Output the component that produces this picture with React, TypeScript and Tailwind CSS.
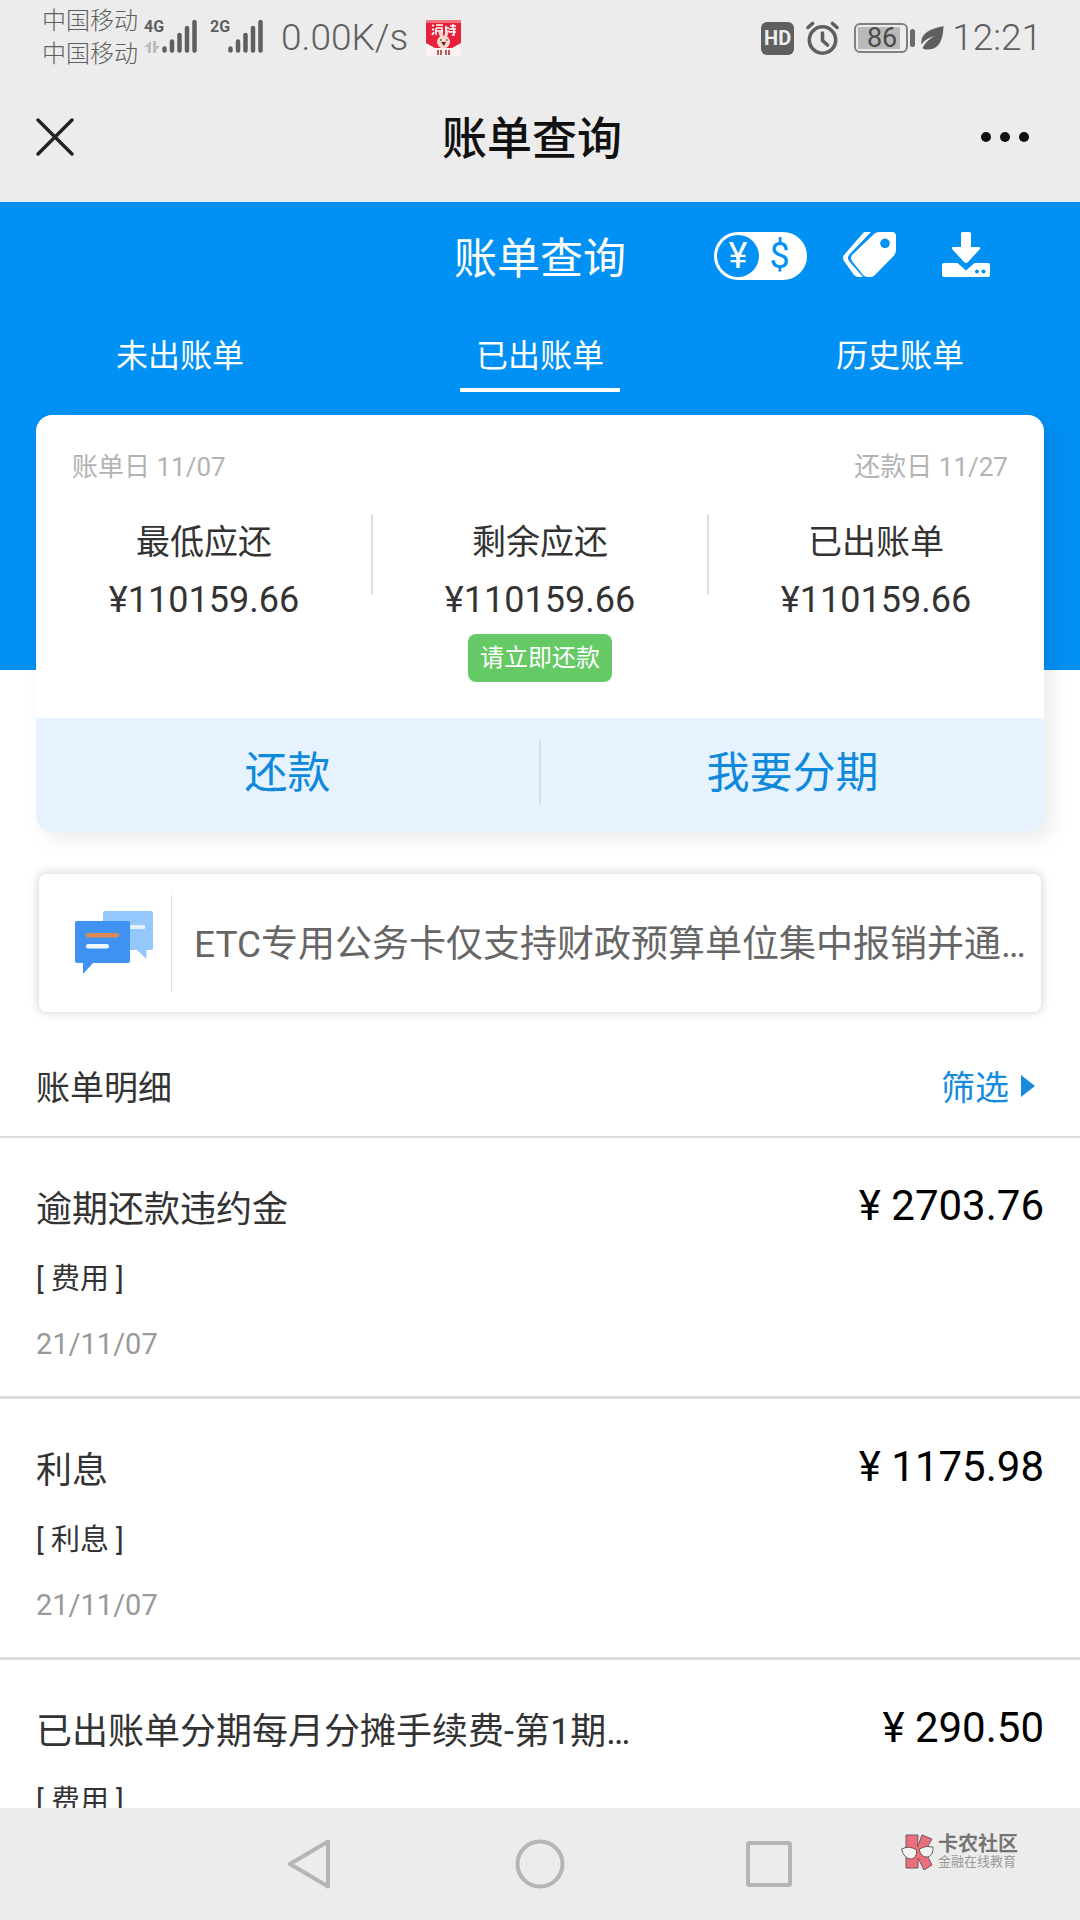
type Bill = { title: string; category: string; date: string; amount: string };

const TABS = ["未出账单", "已出账单", "历史账单"];

const SUMMARY = [
  { label: "最低应还", amount: "¥110159.66" },
  { label: "剩余应还", amount: "¥110159.66", tip: "请立即还款" },
  { label: "已出账单", amount: "¥110159.66" },
];

const BILLS: Bill[] = [
  { title: "逾期还款违约金", category: "[ 费用 ]", date: "21/11/07", amount: "¥ 2703.76" },
  { title: "利息", category: "[ 利息 ]", date: "21/11/07", amount: "¥ 1175.98" },
  { title: "已出账单分期每月分摊手续费-第1期…", category: "[ 费用 ]", date: "21/11/07", amount: "¥ 290.50" },
];

function Signal({ type, data }: { type: string; data?: boolean }) {
  return (
    <div className="flex h-[34px]">
      <div className="flex w-[18px] flex-col justify-between">
        <span className="text-base leading-4 font-bold">{type}</span>
        {data && (
          <svg className="h-3 w-4" viewBox="0 0 16 12" fill="#bdbdbd">
            <path d="M4 12V6H0L7 0v12zM9 0h3v5h4l-4 4v3H9z" />
          </svg>
        )}
      </div>
      <svg className="h-[34px] w-[35px]" viewBox="0 0 35 34" stroke="#5f5f5f" strokeWidth="4.500" strokeLinecap="round">
        <path d="M2.500 29.500v2M10 22.500v9M17.500 16v15.500M25 9v22.500M32.500 3v28.500" />
      </svg>
    </div>
  );
}

function StatusBar() {
  return (
    <div className="flex h-[72px] items-center justify-between pt-1 pr-[38px] pl-[42px] text-[#5f5f5f]">
      <div className="flex items-center">
        <div className="flex flex-col text-2xl leading-[33px] font-light">
          <span>中国移动</span>
          <span>中国移动</span>
        </div>
        <div className="ml-1.5 flex gap-[13px] pb-1">
          <Signal type="4G" data />
          <Signal type="2G" />
        </div>
        <span className="ml-[18px] text-[37px] font-light">0.00K/s</span>
        <svg className="ml-[18px] h-9 w-[35px]" viewBox="0 0 35 36">
          <rect width="35" height="36" fill="#fbf3f3" />
          <path d="M0 0h35v23l-9 5H9l-9-5z" fill="#e8203a" />
          <path d="M0 0h35v3H0z" fill="#f4707c" />
          <path
            d="M6 5l2 1M6 9l2 1M6 15l2-3M10 5h7M10 8h6v7M10 8v7M9 11h8M20 6v9M19 8h4M19 12l4-1M24 6h6M27 4v5M23 9h7M23 12h7M28 9v6h-2"
            fill="none"
            stroke="#fff"
            strokeWidth="1.600"
          />
          <path d="M14 12l2.500 8M21 12l-2.500 8" stroke="#f6d8cb" strokeWidth="3" strokeLinecap="round" />
          <circle cx="17.500" cy="22" r="6.500" fill="#f5d9cd" />
          <path d="M15 22h5l-2 4z" fill="#6d1a24" />
          <path d="M14 20h1.500M20 20h1.500" stroke="#553" strokeWidth="1.500" />
          <path d="M12 30v5M15 30v5M20 30v5M23 30v5" stroke="#b04a48" strokeWidth="1.800" />
        </svg>
      </div>
      <div className="flex items-center">
        <span className="flex h-[33px] w-[33px] items-center justify-center rounded-md bg-[#5f5f5f] text-xl font-bold text-[#ededed]">
          HD
        </span>
        <svg className="ml-3 h-[34px] w-[33px]" viewBox="0 0 33 34" fill="none" stroke="#5f5f5f" strokeLinecap="round">
          <circle cx="16.500" cy="19" r="13.200" strokeWidth="3.600" />
          <path d="M16.500 12v7.500l5 4.500" strokeWidth="3.600" />
          <path d="M2 6.500L6.500 2.500M31 6.500L26.500 2.500" strokeWidth="3.600" />
        </svg>
        <div className="ml-[15px] flex items-center gap-0.5">
          <div className="h-[30px] w-[54px] rounded-md border-2 border-[#808080] p-0.5">
            <div className="flex h-full w-[42px] items-center justify-center bg-[#b9b9b9] pl-1.5 text-[27px] text-[#4a4a4a]">86</div>
          </div>
          <div className="h-[18px] w-[5px] rounded-sm bg-[#6a6a6a]" />
        </div>
        <svg className="ml-1.5 h-6 w-[23px]" viewBox="0 0 23 24">
          <path d="M22.500 0C22 11 20 24 6 23.500c-2 0-3-.500-4.500-1.500C4 17 9 12 14.500 9.500 9 11 3 14.500.500 18.500-1 8 8 3 22.500 0z" fill="#5f5f5f" />
        </svg>
        <span className="ml-2 text-[37px] font-light">12:21</span>
      </div>
    </div>
  );
}

function TitleBar() {
  return (
    <header className="grid h-[130px] grid-cols-[1fr_auto_1fr] items-center px-9">
      <button aria-label="关闭" className="justify-self-start">
        <svg className="h-[38px] w-[38px]" viewBox="0 0 38 38" stroke="#222" strokeWidth="3.400" strokeLinecap="round">
          <path d="M2 2l34 34M36 2L2 36" />
        </svg>
      </button>
      <h1 className="pt-1.5 pr-4 text-[45px] leading-[60px] font-medium text-[#111]">账单查询</h1>
      <button aria-label="更多" className="mr-3.5 justify-self-end">
        <svg className="h-3 w-[50px]" viewBox="0 0 50 12" fill="#111">
          <circle cx="6" cy="6" r="5" />
          <circle cx="25" cy="6" r="5" />
          <circle cx="44" cy="6" r="5" />
        </svg>
      </button>
    </header>
  );
}

function Toolbar() {
  return (
    <div className="flex items-center justify-end gap-9 pr-[90px] pb-1">
      <button aria-label="切换币种" className="flex h-12 w-[93px] items-center rounded-full bg-white p-[3px] text-4xl">
        <span className="flex h-[42px] w-[42px] items-center justify-center rounded-full bg-[#0190f3] text-white">¥</span>
        <span className="flex-1 pr-1 text-center text-[#0190f3]">$</span>
      </button>
      <button aria-label="标签">
        <svg className="h-12 w-[63px]" viewBox="0 0 63 48" fill="#fff">
          <path
            fillRule="evenodd"
            d="M36 0h13q4 0 4 4v14q0 3-2 5.500L32 43q-2 2-4.500 2H25q-3 0-5-2L9 29q-2-3 0-6L30 3q2.500-3 6-3zM42 6.500a4.800 4.800 0 1 0 .010 0z"
          />
          <path d="M21 0h7L6 23q-2 3 0 6l14 16h-4q-3 0-5-2L1 29q-2-3 0-6z" />
        </svg>
      </button>
      <button aria-label="下载">
        <svg className="h-12 w-12" viewBox="0 0 48 48">
          <path d="M2 31h13.500l8.500 7.500L32.500 31H46q2 0 2 2v10q0 2-2 2H2q-2 0-2-2V33q0-2 2-2z" fill="#fff" />
          <path d="M20.500 0h7q1.500 0 1.500 1.500V15h7.500q3 0 1 2.500L26 30q-2 2-4 0L10.500 17.500q-2-2.500 1-2.500H19V1.500Q19 0 20.500 0z" fill="#fff" />
          <circle cx="35" cy="39.500" r="2" fill="#0190f3" />
          <circle cx="41.500" cy="39.500" r="2" fill="#0190f3" />
        </svg>
      </button>
    </div>
  );
}

function SummaryCard() {
  return (
    <section className="mx-9 -mt-[255px] rounded-2xl bg-white shadow-[8px_8px_20px_rgba(0,0,0,0.08)]">
      <div className="flex justify-between px-9 pt-9 text-[26px] leading-8 text-[#b3b3b3]">
        <span>账单日 11/07</span>
        <span>还款日 11/27</span>
      </div>
      <div className="mt-[31px] grid grid-cols-3 pb-9">
        {SUMMARY.map((item, i) => (
          <div key={item.label} className="flex">
            <div className="flex flex-1 flex-col items-center pt-1 text-[#333]">
              <span className="text-[34px] leading-12">{item.label}</span>
              <span className="mt-2.5 text-4xl leading-12">{item.amount}</span>
              {item.tip && (
                <span className="mt-2.5 flex h-12 items-center rounded-lg bg-[#65c966] px-3 text-2xl text-white">{item.tip}</span>
              )}
            </div>
            {i < SUMMARY.length - 1 && <div className="-mx-px h-20 w-0.5 bg-[#e0e0e0]" />}
          </div>
        ))}
      </div>
      <div className="flex h-[114px] items-center rounded-b-2xl bg-[#e6f3fe] pb-1 text-[43px] text-[#0f89dc]">
        <button className="flex-1">还款</button>
        <div className="h-16 w-0.5 bg-[#d3dfe9]" />
        <button className="flex-1">我要分期</button>
      </div>
    </section>
  );
}

function Notice() {
  return (
    <section className="mx-[39px] mt-[42px] flex h-[138px] items-center rounded-lg bg-white pl-9 shadow-[0_0_8px_2px_rgba(0,0,0,0.14)]">
      <svg className="h-16 w-[78px] shrink-0" viewBox="0 0 78 64">
        <path d="M30 0h46q2 0 2 2v35q0 2-2 2h-4.500v9L62 39H30q-2 0-2-2V2q0-2 2-2z" fill="#94c7fc" />
        <rect x="54" y="14" width="16" height="4" rx="1" fill="#e3f1ff" />
        <path d="M2 10h51q2 0 2 2v38q0 2-2 2H18L8 63V52H2q-2 0-2-2V12q0-2 2-2z" fill="#3f92f2" />
        <rect x="11" y="22" width="33" height="4.500" rx="2.200" fill="#de8a55" />
        <rect x="11" y="33" width="23" height="4.500" rx="2" fill="#eef8ff" />
      </svg>
      <div className="ml-[18px] h-24 w-px shrink-0 bg-[#ddd]" />
      <p className="ml-[22px] pt-1 text-[37px] leading-12 whitespace-nowrap text-[#666]">ETC专用公务卡仅支持财政预算单位集中报销并通…</p>
    </section>
  );
}

function BillRow({ bill }: { bill: Bill }) {
  return (
    <li className="flex items-start justify-between border-b-[3px] border-[#dcdcdc] px-9 pt-12 pb-8">
      <div className="flex flex-col">
        <span className="text-4xl leading-12 text-[#333]">{bill.title}</span>
        <span className="mt-[25px] text-[29px] leading-10 text-[#333]">{bill.category}</span>
        <span className="mt-[25px] text-[29px] leading-10 text-[#999]">{bill.date}</span>
      </div>
      <span className="text-[42px] leading-10 text-black">{bill.amount}</span>
    </li>
  );
}

function NavBar() {
  return (
    <nav className="grid h-28 shrink-0 grid-cols-[1fr_auto_1fr] items-center bg-[#ececec]">
      <button aria-label="返回" className="mr-[185px] justify-self-end">
        <svg className="h-[50px] w-[43px]" viewBox="0 0 43 50" fill="none" stroke="#b5b5b5" strokeWidth="4" strokeLinejoin="round">
          <path d="M41 2.500v45L3 25z" />
        </svg>
      </button>
      <button aria-label="主页">
        <svg className="h-[50px] w-[50px]" viewBox="0 0 50 50" fill="none" stroke="#b5b5b5" strokeWidth="4">
          <circle cx="25" cy="25" r="22.500" />
        </svg>
      </button>
      <div className="flex items-center justify-between pr-[62px] pl-[181px]">
        <button aria-label="最近任务">
          <svg className="h-[46px] w-[46px]" viewBox="0 0 46 46" fill="none" stroke="#b5b5b5" strokeWidth="4">
            <rect x="2" y="2" width="42" height="42" rx="1.500" />
          </svg>
        </button>
        <div className="flex items-center gap-1 pb-6">
          <svg className="h-9 w-[33px]" viewBox="0 0 33 36" stroke="#6b5a5c" strokeWidth="1" strokeLinejoin="round">
            <path d="M5 1h12l-.500 12L21 1l10 4-7 12 7 14-8 5-6-12v10H5z" fill="#ee6f7c" />
            <path d="M.500 15q8-4 15 1 .500 8-5 9Q3 25 .500 15zM18 15q7-4 14-2 .500 8-5 10-7 1-9-8z" fill="#f4f4f4" />
          </svg>
          <div className="flex flex-col">
            <span className="text-xl leading-5 font-bold text-[#747474]">卡农社区</span>
            <span className="text-[13px] leading-4 text-[#999]">金融在线教育</span>
          </div>
        </div>
      </div>
    </nav>
  );
}

export default function App() {
  return (
    <div className="flex h-screen flex-col overflow-hidden bg-white font-['Roboto','Noto_Sans_CJK_SC',sans-serif]">
      <div className="shrink-0 bg-[#ececec]">
        <StatusBar />
        <TitleBar />
      </div>
      <main className="min-h-0 flex-1 overflow-hidden">
        <div className="bg-[#0190f3] pb-[278px] text-white">
          <div className="grid h-28 grid-cols-[1fr_auto_1fr] items-center">
            <h2 className="col-start-2 pt-0.5 text-[43px]">账单查询</h2>
            <Toolbar />
          </div>
          <div className="grid grid-cols-3">
            {TABS.map((tab, i) => (
              <button key={tab} className="flex flex-col items-center gap-2 pt-[18px] text-[32px] leading-12">
                {tab}
                <span className={i === 1 ? "h-1 w-40 bg-white" : "h-1 w-40"} />
              </button>
            ))}
          </div>
        </div>
        <SummaryCard />
        <Notice />
        <div className="mt-[52px] flex items-center justify-between border-b-2 border-[#dcdcdc] pr-[45px] pb-6 pl-9 text-[34px] leading-12">
          <h3 className="text-[#333]">账单明细</h3>
          <button className="flex items-center gap-3 text-[#168bdc]">
            筛选
            <svg className="mb-1 h-[22px] w-3.5" viewBox="0 0 14 22" fill="#168bdc">
              <path d="M0 0l14 11L0 22z" />
            </svg>
          </button>
        </div>
        <ul>
          {BILLS.map((bill) => (
            <BillRow key={bill.title} bill={bill} />
          ))}
        </ul>
      </main>
      <NavBar />
    </div>
  );
}
